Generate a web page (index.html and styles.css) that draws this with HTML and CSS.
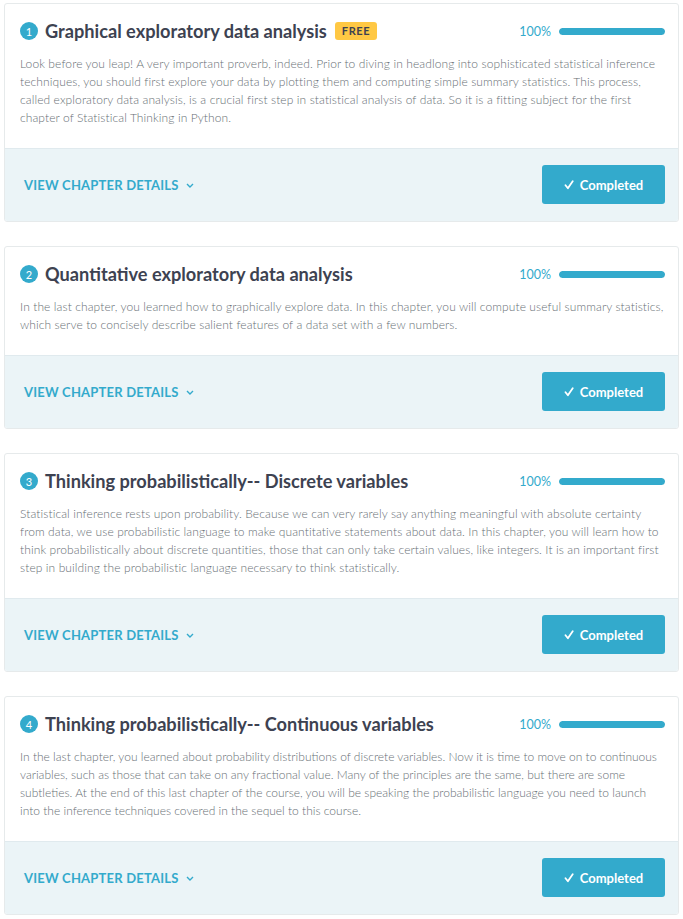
FILE: index.html
```html
<!DOCTYPE html>
<html>
<head>
<meta charset="utf-8">
<link rel="stylesheet" href="styles.css">
</head>
<body>
<div class="list">
  <section class="card">
    <div class="card-body">
      <div class="head">
        <div class="title-wrap">
          <span class="num">1</span>
          <h4 class="title">Graphical exploratory data analysis</h4>
          <span class="free">FREE</span>
        </div>
        <div class="progress">
          <span class="pct">100%</span>
          <span class="bar"><span class="fill" style="width:100%"></span></span>
        </div>
      </div>
      <p class="desc">Look before you leap! A very important proverb, indeed. Prior to diving in headlong into sophisticated statistical inference techniques, you should first explore your data by plotting them and computing simple summary statistics. This process, called exploratory data analysis, is a crucial first step in statistical analysis of data. So it is a fitting subject for the first chapter of Statistical Thinking in Python.</p>
    </div>
    <div class="card-foot">
      <a class="details">VIEW CHAPTER DETAILS <svg class="chev" viewBox="0 0 8 5" width="8" height="5"><path d="M1 1l3 3 3-3" fill="none" stroke="currentColor" stroke-width="1.4"/></svg></a>
      <button class="done"><svg class="check" viewBox="0 0 10 10" width="10" height="10"><path d="M1.5 5.2l2.4 3 4.8-7" fill="none" stroke="currentColor" stroke-width="1.8" stroke-linecap="round" stroke-linejoin="round"/></svg>Completed</button>
    </div>
  </section>

  <section class="card">
    <div class="card-body">
      <div class="head">
        <div class="title-wrap">
          <span class="num">2</span>
          <h4 class="title">Quantitative exploratory data analysis</h4>
        </div>
        <div class="progress">
          <span class="pct">100%</span>
          <span class="bar"><span class="fill" style="width:100%"></span></span>
        </div>
      </div>
      <p class="desc">In the last chapter, you learned how to graphically explore data. In this chapter, you will compute useful summary statistics, which serve to concisely describe salient features of a data set with a few numbers.</p>
    </div>
    <div class="card-foot">
      <a class="details">VIEW CHAPTER DETAILS <svg class="chev" viewBox="0 0 8 5" width="8" height="5"><path d="M1 1l3 3 3-3" fill="none" stroke="currentColor" stroke-width="1.4"/></svg></a>
      <button class="done"><svg class="check" viewBox="0 0 10 10" width="10" height="10"><path d="M1.5 5.2l2.4 3 4.8-7" fill="none" stroke="currentColor" stroke-width="1.8" stroke-linecap="round" stroke-linejoin="round"/></svg>Completed</button>
    </div>
  </section>

  <section class="card">
    <div class="card-body">
      <div class="head">
        <div class="title-wrap">
          <span class="num">3</span>
          <h4 class="title">Thinking probabilistically-- Discrete variables</h4>
        </div>
        <div class="progress">
          <span class="pct">100%</span>
          <span class="bar"><span class="fill" style="width:100%"></span></span>
        </div>
      </div>
      <p class="desc">Statistical inference rests upon probability. Because we can very rarely say anything meaningful with absolute certainty from data, we use probabilistic language to make quantitative statements about data. In this chapter, you will learn how to think probabilistically about discrete quantities, those that can only take certain values, like integers. It is an important first step in building the probabilistic language necessary to think statistically.</p>
    </div>
    <div class="card-foot">
      <a class="details">VIEW CHAPTER DETAILS <svg class="chev" viewBox="0 0 8 5" width="8" height="5"><path d="M1 1l3 3 3-3" fill="none" stroke="currentColor" stroke-width="1.4"/></svg></a>
      <button class="done"><svg class="check" viewBox="0 0 10 10" width="10" height="10"><path d="M1.5 5.2l2.4 3 4.8-7" fill="none" stroke="currentColor" stroke-width="1.8" stroke-linecap="round" stroke-linejoin="round"/></svg>Completed</button>
    </div>
  </section>

  <section class="card">
    <div class="card-body">
      <div class="head">
        <div class="title-wrap">
          <span class="num">4</span>
          <h4 class="title">Thinking probabilistically-- Continuous variables</h4>
        </div>
        <div class="progress">
          <span class="pct">100%</span>
          <span class="bar"><span class="fill" style="width:100%"></span></span>
        </div>
      </div>
      <p class="desc desc-tight">In the last chapter, you learned about probability distributions of discrete variables. Now it is time to move on to continuous variables, such as those that can take on any fractional value. Many of the principles are the same, but there are some subtleties. At the end of this last chapter of the course, you will be speaking the probabilistic language you need to launch into the inference techniques covered in the sequel to this course.</p>
    </div>
    <div class="card-foot">
      <a class="details">VIEW CHAPTER DETAILS <svg class="chev" viewBox="0 0 8 5" width="8" height="5"><path d="M1 1l3 3 3-3" fill="none" stroke="currentColor" stroke-width="1.4"/></svg></a>
      <button class="done"><svg class="check" viewBox="0 0 10 10" width="10" height="10"><path d="M1.5 5.2l2.4 3 4.8-7" fill="none" stroke="currentColor" stroke-width="1.8" stroke-linecap="round" stroke-linejoin="round"/></svg>Completed</button>
    </div>
  </section>
</div>
</body>
</html>
```

FILE: styles.css
```css
html, body {
  margin: 0;
  padding: 0;
  background: #fff;
}
body {
  font-family: Lato, "Open Sans", sans-serif;
  color: #3d4251;
}
.list {
  display: flex;
  flex-direction: column;
  gap: 24px;
  padding: 3px 4px 0 4px;
}
.card {
  border: 1px solid #e6eaeb;
  border-radius: 3px;
  background: #fff;
  overflow: hidden;
}
.card-body {
  padding: 14px 11px 21px 15px;
}
.head {
  display: flex;
  align-items: center;
  justify-content: space-between;
  height: 26px;
  margin-right: 2px;
}
.title-wrap {
  display: flex;
  align-items: center;
}
.num {
  width: 18px;
  height: 18px;
  border-radius: 50%;
  background: #33aacc;
  color: #fff;
  font-size: 11px;
  font-weight: 400;
  display: flex;
  align-items: center;
  justify-content: center;
  margin-right: 7px;
}
.title {
  margin: 0;
  font-size: 18.2px;
  font-weight: 700;
  color: #3d4251;
  line-height: 24px;
}
.free {
  margin-left: 8px;
  background: #ffc844;
  color: #3d4251;
  font-size: 11px;
  font-weight: 700;
  letter-spacing: 0.6px;
  border-radius: 3px;
  padding: 0 7px;
  height: 18px;
  line-height: 18px;
}
.progress {
  display: flex;
  align-items: center;
  gap: 8px;
}
.pct {
  color: #33aacc;
  font-size: 12.5px;
  font-weight: 400;
}
.bar {
  display: block;
  width: 106px;
  height: 7px;
  border-radius: 4px;
  background: #e6eaeb;
  overflow: hidden;
}
.fill {
  display: block;
  height: 100%;
  background: #33aacc;
  border-radius: 4px;
}
.desc {
  margin: 11px 0 0 0;
  font-size: 12px;
  font-weight: 300;
  letter-spacing: 0.1px;
  line-height: 18px;
  color: #686f75;
}
.desc-tight {
  letter-spacing: 0;
}
.card-foot {
  background: #ebf4f7;
  border-top: 1px solid #e0eaee;
  display: flex;
  align-items: center;
  justify-content: space-between;
  padding: 16px 13px 17px 19px;
}
.details {
  color: #33aacc;
  font-size: 13px;
  font-weight: 700;
  letter-spacing: 0.2px;
  display: flex;
  align-items: center;
  gap: 7px;
  cursor: pointer;
}
.chev {
  display: block;
  margin-top: 1px;
}
.done {
  width: 123px;
  height: 39px;
  border: none;
  border-radius: 3px;
  background: #33aacc;
  color: #fff;
  font-family: Lato, "Open Sans", sans-serif;
  font-size: 13px;
  font-weight: 700;
  display: flex;
  align-items: center;
  justify-content: center;
  gap: 6px;
  padding: 0;
}
.check {
  display: block;
}
```
